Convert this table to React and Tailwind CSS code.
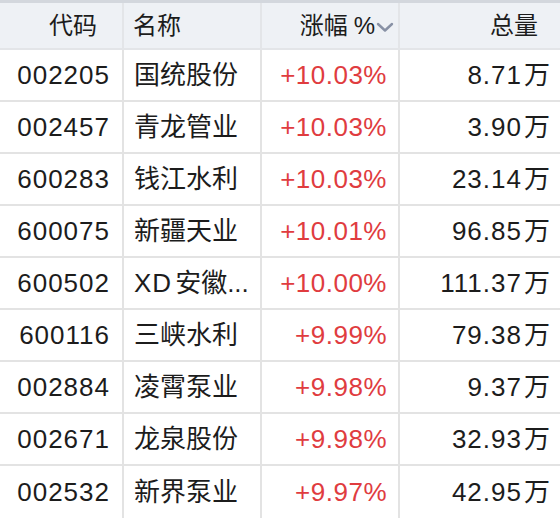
import React from "react";

const rows = [
  ["002205", "国统股份", "+10.03%", "8.71万"],
  ["002457", "青龙管业", "+10.03%", "3.90万"],
  ["600283", "钱江水利", "+10.03%", "23.14万"],
  ["600075", "新疆天业", "+10.01%", "96.85万"],
  ["600502", "XD安徽…", "+10.00%", "111.37万"],
  ["600116", "三峡水利", "+9.99%", "79.38万"],
  ["002884", "凌霄泵业", "+9.98%", "9.37万"],
  ["002671", "龙泉股份", "+9.98%", "32.93万"],
  ["002532", "新界泵业", "+9.97%", "42.95万"],
];

const font = { fontFamily: '"Liberation Sans", "Noto Sans CJK SC", sans-serif' };

function Vol({ v }) {
  const num = v.slice(0, -1);
  return (
    <span>
      <span className="tracking-[1px]">{num}</span>
      <span className="ml-[2px]">万</span>
    </span>
  );
}

export default function App() {
  return (
    <div className="w-[560px] h-[518px] overflow-hidden bg-white text-[#1c1c1c]" style={font}>
      <div className="h-[3px] bg-[#d3d7dd]" />
      <div className="grid grid-cols-[124px_138px_138px_1fr] h-[47px] bg-[#eef1f5] border-b-2 border-[#e3e5e8] text-[24px]">
        <div className="flex items-center justify-end pr-[25px] border-r-2 border-[#e3e5e8]">代码</div>
        <div className="flex items-center pl-[9px] border-r-2 border-[#e3e5e8]">名称</div>
        <div className="flex items-center justify-end pr-[4px] border-r-2 border-[#e3e5e8]">
          <span>涨幅</span>
          <span className="ml-[6px]">%</span>
          <svg width="18" height="12" viewBox="0 0 18 12" className="ml-[1px] mt-[3px]">
            <path d="M2 3 L9 9.5 L16 3" fill="none" stroke="#8891a5" strokeWidth="2.4" strokeLinecap="round" strokeLinejoin="round" />
          </svg>
        </div>
        <div className="flex items-center justify-end pr-[22px]">总量</div>
      </div>
      {rows.map((r, i) => (
        <div
          key={r[0]}
          className={
            "grid grid-cols-[124px_138px_138px_1fr] h-[52px] text-[26px] " +
            (i < rows.length - 1 ? "border-b-2 border-[#e3e3e3]" : "")
          }
        >
          <div className="flex items-center justify-end pr-[12px] border-r-2 border-[#e3e3e3] tracking-[1px]">{r[0]}</div>
          <div className="flex items-center pl-[10px] border-r-2 border-[#e3e3e3] whitespace-nowrap">
            {r[1].startsWith("XD") ? (
              <span>
                <span className="tracking-[1px]">XD</span>
                <span className="ml-[3px]">安徽</span>
                <span>...</span>
              </span>
            ) : (
              r[1]
            )}
          </div>
          <div className="flex items-center justify-end pr-[11px] border-r-2 border-[#e3e3e3] text-[#e03c3f] tracking-[0.5px]">{r[2]}</div>
          <div className="flex items-center justify-end pr-[10px]">
            <Vol v={r[3]} />
          </div>
        </div>
      ))}
    </div>
  );
}
